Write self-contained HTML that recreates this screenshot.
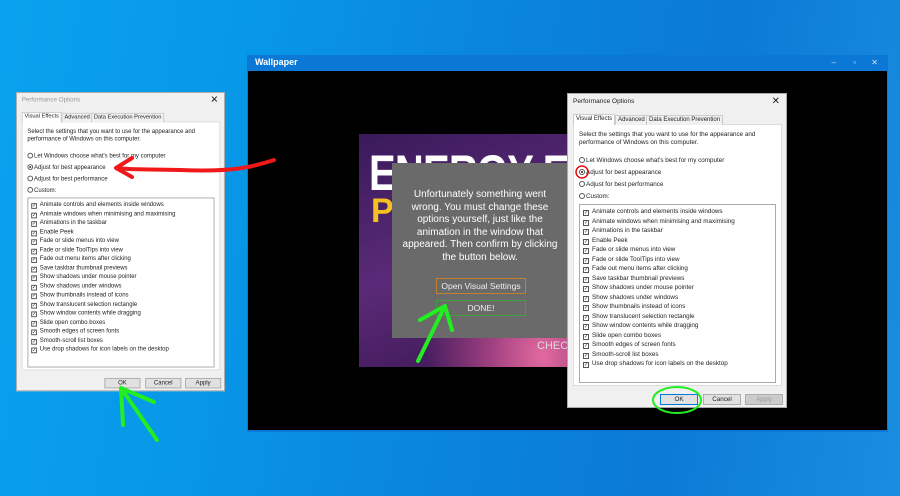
<!DOCTYPE html>
<html><head><meta charset="utf-8"><style>
*{margin:0;padding:0;box-sizing:border-box}
body{width:900px;height:496px;overflow:hidden;position:relative;font-family:"Liberation Sans",sans-serif;
background:linear-gradient(100deg,#0aa2ee 0%,#0898e8 25%,#0a86dc 50%,#0b7ad6 75%,#1a8ee0 100%)}
div{white-space:nowrap}
.abs{position:absolute}
.win{left:247px;top:55px;width:641px;height:377px;background:#0a78d4}
.win .bar{height:15px;color:#fff;font-weight:bold;font-size:9px;line-height:15px;padding-left:8px}
.win .ctl{position:absolute;top:0;color:#cfe3f7;font-size:8px;line-height:15px}
.win .body{position:absolute;left:1px;top:16px;right:1px;bottom:2px;background:#000}
.game{left:359px;top:134px;width:216px;height:233px;overflow:hidden;
background:radial-gradient(ellipse at 85% 95%,#e46aa0 0%,#a04080 20%,transparent 45%),linear-gradient(160deg,#3a1a5a,#5a2a78 50%,#3a1550)}
.big{position:absolute;left:10px;top:10px;color:#fff;font-weight:bold;font-size:50px;letter-spacing:-1px;transform:scaleX(.8);transform-origin:left}
.pop{left:392px;top:163px;width:200px;height:175px;background:#6a6a6a;color:#fff;font-size:10px;line-height:12.5px}
.txt{position:absolute;left:0;top:26px;width:176px;text-align:center}
.btn{position:absolute;font-size:8.5px;line-height:14px;color:#eee;text-align:center}
.dlg{position:absolute;width:220px;height:315px;background:#f0f0f0;border:1px solid #aaa;font-size:6.3px;color:#222;transform-origin:0 0}
.dlg .t{position:absolute;left:5px;top:4px;font-size:6.5px}
.dlg .x{position:absolute;right:6px;top:2px;font-size:10px}
.tab{position:absolute;top:21px;height:10px;border:1px solid #ccc;border-bottom:none;background:#f0f0f0;font-size:6px;line-height:9px;padding:0 2px}
.panel{position:absolute;left:5px;top:30px;width:209px;height:262px;background:#fff;border:1px solid #ddd}
.desc{position:absolute;left:11px;top:37px;line-height:8px;width:200px;white-space:normal}
.r{position:absolute;left:11px;height:8px;line-height:8px}
.r i{display:inline-block;width:6px;height:6px;border:1px solid #555;border-radius:50%;vertical-align:-1px;margin-right:1px;position:relative}
.r i.on:after{content:"";position:absolute;left:1px;top:1px;width:2px;height:2px;border-radius:50%;background:#222}
.lb{position:absolute;left:11px;top:110px;width:197px;height:179px;border:1px solid #aaa}
.it{position:absolute;left:3px;height:9px;line-height:9px}
.it i{display:inline-block;width:6px;height:6px;border:1px solid #555;vertical-align:-1px;margin-right:3px;font-style:normal;font-size:5px;line-height:5px;text-align:center}
.b{position:absolute;top:300px;width:38px;height:11px;border:1px solid #adadad;background:#e1e1e1;text-align:center;line-height:9px}
</style></head><body>

<div class="abs win"><div class="bar">Wallpaper</div>
<span class="ctl" style="right:52px">–</span><span class="ctl" style="right:32px">▫</span><span class="ctl" style="right:10px">✕</span>
<div class="body"></div></div>

<div class="abs game"><div class="big">ENERGY EN</div>
<div style="position:absolute;left:12px;top:58px;color:#f5c020;font-weight:bold;font-size:34px">P</div>
<div style="position:absolute;left:178px;top:206px;color:#ddd;font-size:11px">CHEC</div></div>

<div class="abs pop"><div class="txt">Unfortunately something went<br>wrong. You must change these<br>options yourself, just like the<br>animation in the window that<br>appeared. Then confirm by clicking<br>the button below.</div>
<div class="btn" style="left:44px;top:115px;width:90px;border:1px solid #c08030">Open Visual Settings</div>
<div class="btn" style="left:44px;top:137px;width:90px;border:1px solid #40a040">DONE!</div></div>

<div class="dlg" id="d2" style="left:567px;top:93px">
<div class="t">Performance Options</div><div class="x">✕</div>
<div class="panel"></div>
<div class="tab" style="left:5px;top:20px;height:11px;background:#fff">Visual Effects</div>
<div class="tab" style="left:47px">Advanced</div>
<div class="tab" style="left:78px">Data Execution Prevention</div>
<div class="desc">Select the settings that you want to use for the appearance and performance of Windows on this computer.</div>
<div class="r" style="top:63px"><i></i>Let Windows choose what's best for my computer</div>
<div class="r" style="top:75px"><i class="on"></i>Adjust for best appearance</div>
<div class="r" style="top:87px"><i></i>Adjust for best performance</div>
<div class="r" style="top:99px"><i></i>Custom:</div>
<div class="lb">
<div class="it" style="top:2px"><i>✓</i>Animate controls and elements inside windows</div>
<div class="it" style="top:11.5px"><i>✓</i>Animate windows when minimising and maximising</div>
<div class="it" style="top:21px"><i>✓</i>Animations in the taskbar</div>
<div class="it" style="top:30.5px"><i>✓</i>Enable Peek</div>
<div class="it" style="top:40px"><i>✓</i>Fade or slide menus into view</div>
<div class="it" style="top:49.5px"><i>✓</i>Fade or slide ToolTips into view</div>
<div class="it" style="top:59px"><i>✓</i>Fade out menu items after clicking</div>
<div class="it" style="top:68.5px"><i>✓</i>Save taskbar thumbnail previews</div>
<div class="it" style="top:78px"><i>✓</i>Show shadows under mouse pointer</div>
<div class="it" style="top:87.5px"><i>✓</i>Show shadows under windows</div>
<div class="it" style="top:97px"><i>✓</i>Show thumbnails instead of icons</div>
<div class="it" style="top:106.5px"><i>✓</i>Show translucent selection rectangle</div>
<div class="it" style="top:116px"><i>✓</i>Show window contents while dragging</div>
<div class="it" style="top:125.5px"><i>✓</i>Slide open combo boxes</div>
<div class="it" style="top:135px"><i>✓</i>Smooth edges of screen fonts</div>
<div class="it" style="top:144.5px"><i>✓</i>Smooth-scroll list boxes</div>
<div class="it" style="top:154px"><i>✓</i>Use drop shadows for icon labels on the desktop</div>
</div>
<div class="b" style="left:92px;border-color:#0078d7">OK</div>
<div class="b" style="left:135px">Cancel</div>
<div class="b" style="left:177px;color:#999;background:#ccc">Apply</div>
</div>

<div id="slot"></div>

<svg class="abs" style="left:0;top:0" width="900" height="496">
<path d="M274 160 C250 168 230 172 180 170 C150 169 130 170 117 168" stroke="#f01818" stroke-width="4" fill="none" stroke-linecap="round"/>
<path d="M132 158 L116 168 L132 177" stroke="#f01818" stroke-width="4" fill="none" stroke-linecap="round" stroke-linejoin="round"/>
<path d="M121 388 L157 440 M121 388 L123 425 M121 388 L154 402" stroke="#22ee22" stroke-width="4" fill="none" stroke-linecap="round"/>
<path d="M418 361 L445 306 M445 306 L420 320 M445 306 L452 330" stroke="#22ee22" stroke-width="4" fill="none" stroke-linecap="round"/>
<ellipse cx="677" cy="400" rx="24" ry="13" stroke="#22ee22" stroke-width="2" fill="none"/>
<circle cx="582" cy="172" r="6" stroke="#e01010" stroke-width="1.5" fill="none"/>
</svg>

<script>
var d=document.getElementById('d2').cloneNode(true);
d.id='d1';d.style.left='16px';d.style.top='92px';d.style.transform='scale(0.95)';
d.querySelector('.t').style.color='#999';
d.querySelectorAll('.b')[0].style.borderColor='#adadad';
d.querySelectorAll('.b')[2].style.color='#222';d.querySelectorAll('.b')[2].style.background='#e1e1e1';
var s=document.getElementById('slot');s.parentNode.insertBefore(d,s);
</script>
</body></html>
